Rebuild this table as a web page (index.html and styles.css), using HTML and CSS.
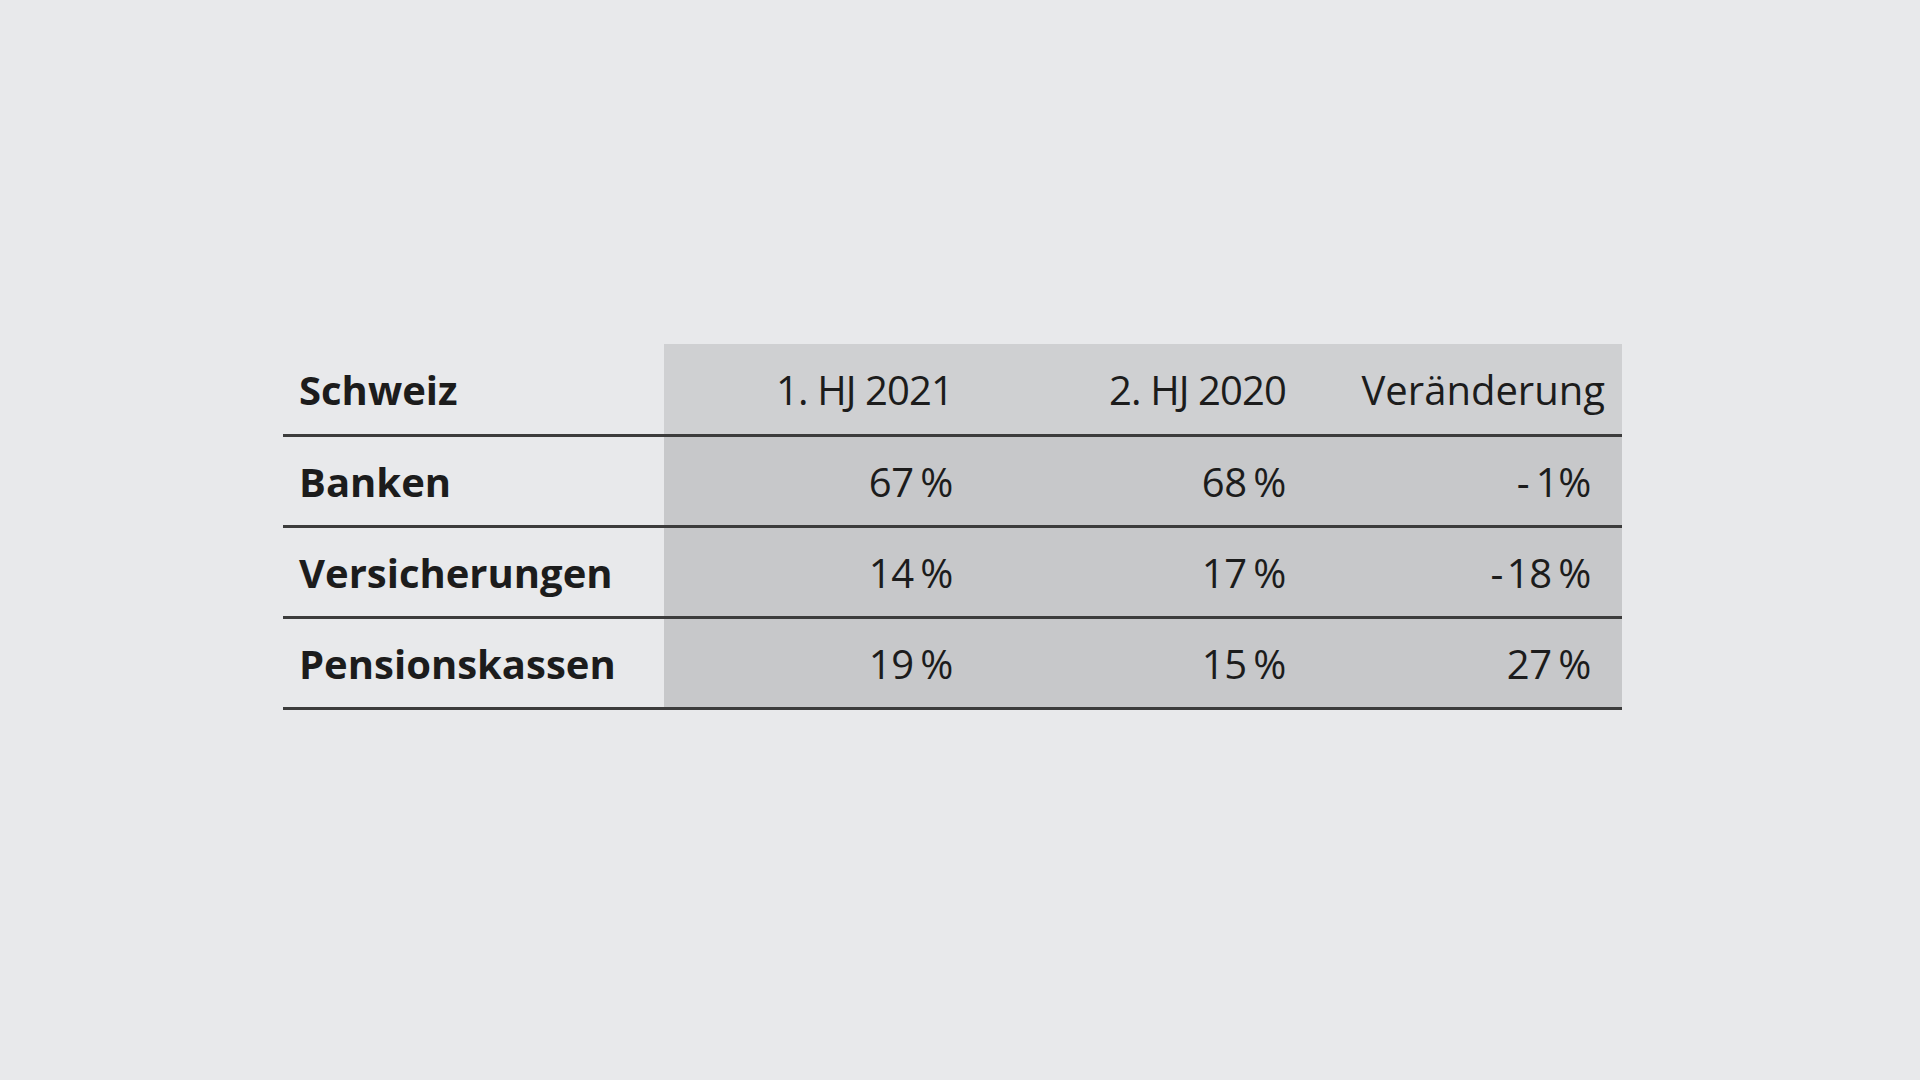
FILE: index.html
```html
<!DOCTYPE html>
<html lang="de">
<head>
<meta charset="utf-8">
<title>Schweiz</title>
<link rel="stylesheet" href="styles.css">
</head>
<body>
<main class="page">
  <div class="table">
    <div class="row head">
      <div class="cell label">Schweiz</div>
      <div class="cell num c1 tight">1. HJ 2021</div>
      <div class="cell num c2 tight">2. HJ 2020</div>
      <div class="cell num c3 headlast">Veränderung</div>
    </div>
    <div class="row body">
      <div class="cell label">Banken</div>
      <div class="cell num c1">67&#8201;%</div>
      <div class="cell num c2">68&#8201;%</div>
      <div class="cell num c3">-&#8201;1%</div>
    </div>
    <div class="row body">
      <div class="cell label">Versicherungen</div>
      <div class="cell num c1">14&#8201;%</div>
      <div class="cell num c2">17&#8201;%</div>
      <div class="cell num c3">-&#8202;18&#8201;%</div>
    </div>
    <div class="row body">
      <div class="cell label">Pensionskassen</div>
      <div class="cell num c1">19&#8201;%</div>
      <div class="cell num c2">15&#8201;%</div>
      <div class="cell num c3">27&#8201;%</div>
    </div>
  </div>
</main>
</body>
</html>
```
FILE: styles.css
```css
html, body {
  margin: 0;
  padding: 0;
  background: #e8e9eb;
}
body {
  width: 1920px;
  height: 1080px;
  overflow: hidden;
  font-family: "Open Sans", "Noto Sans", "DejaVu Sans", sans-serif;
  color: #1c1c1c;
}
.page {
  padding: 344px 0 0 283px;
}
.table {
  width: 1339px;
  display: flex;
  flex-direction: column;
}
.row {
  display: grid;
  grid-template-columns: 381px 301px 333px 324px;
  border-bottom: 3px solid #3c3c3c;
}
.row.head { height: 90px; }
.row.body { height: 88px; }
.cell {
  display: flex;
  align-items: center;
  font-size: 40px;
  white-space: nowrap;
}
.label {
  font-weight: 700;
  padding-left: 16px;
}
.num {
  justify-content: flex-end;
  font-weight: 400;
  letter-spacing: -0.3px;
}
.num.tight { letter-spacing: -0.9px; }
.head .num { background: #cfd0d2; }
.body .num { background: #c7c8ca; }
.c1 { padding-right: 12px; }
.c2 { padding-right: 12px; }
.c3 { padding-right: 31px; }
.c3.headlast { padding-right: 17px; letter-spacing: 0; }
```
